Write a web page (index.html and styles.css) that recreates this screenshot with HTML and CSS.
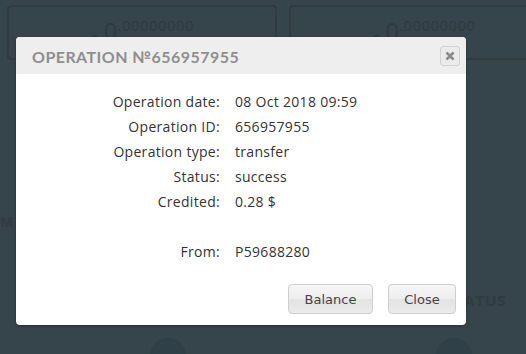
FILE: index.html
```html
<!DOCTYPE html>
<html>
<head>
<meta charset="utf-8">
<link rel="stylesheet" href="styles.css">
</head>
<body>
<div class="page">
  <div class="cards">
    <div class="card"><span class="cur">฿</span><span class="big">0</span><span class="sup">.00000000</span></div>
    <div class="card"><span class="cur">$</span><span class="big">0</span><span class="sup">.00000000</span></div>
  </div>
  <div class="ghost-m">M</div>
  <div class="ghost-status">STATUS</div>
  <div class="circles"><span class="circle"></span><span class="circle"></span></div>
</div>

<div class="modal">
  <div class="modal-header">
    <h2 class="modal-title">OPERATION №656957955</h2>
    <button class="x-btn" aria-label="close">
      <svg width="10" height="10" viewBox="0 0 10 10"><path d="M1.5 1.5 L8.5 8.5 M8.5 1.5 L1.5 8.5" stroke="#8a8a8a" stroke-width="2.6" stroke-linecap="butt"/></svg>
    </button>
  </div>
  <div class="modal-body">
    <div class="lbl">Operation date:</div><div class="val">08 Oct 2018 09:59</div>
    <div class="lbl">Operation ID:</div><div class="val">656957955</div>
    <div class="lbl">Operation type:</div><div class="val">transfer</div>
    <div class="lbl">Status:</div><div class="val">success</div>
    <div class="lbl">Credited:</div><div class="val">0.28 $</div>
    <div class="lbl"></div><div class="val"></div>
    <div class="lbl">From:</div><div class="val">P59688280</div>
  </div>
  <div class="modal-footer">
    <button class="btn btn-balance">Balance</button>
    <button class="btn btn-close">Close</button>
  </div>
</div>
</body>
</html>
```

FILE: styles.css
```css
html, body {
  margin: 0;
  padding: 0;
  width: 526px;
  height: 354px;
  overflow: hidden;
  background: #36444b;
}

.page {
  position: relative;
  height: 354px;
  overflow: hidden;
  font-family: "Open Sans", sans-serif;
}

.cards {
  display: flex;
  gap: 12px;
  padding: 5px 0 0 7px;
}

.card {
  width: 270px;
  height: 55px;
  border: 2px solid #2f3d41;
  border-radius: 4px;
  box-sizing: border-box;
  display: flex;
  align-items: flex-start;
  justify-content: center;
  padding-top: 12px;
  color: #2e3b41;
  flex-shrink: 0;
}

.card .cur { font-size: 16px; margin-top: 10px; margin-right: 4px; }
.card .big { font-size: 24px; line-height: 24px; }
.card .sup { font-size: 14px; line-height: 14px; letter-spacing: 1px; }

.ghost-m {
  position: absolute;
  left: 0;
  top: 212px;
  font-size: 14px;
  font-weight: 700;
  color: #303d43;
}

.ghost-status {
  position: absolute;
  left: 445px;
  top: 290px;
  font-size: 15px;
  font-weight: 700;
  letter-spacing: 1px;
  color: #2f3c42;
}

.circles {
  position: absolute;
  left: 150px;
  top: 338px;
  display: flex;
  gap: 250px;
}

.circle {
  width: 36px;
  height: 36px;
  border-radius: 50%;
  background: #2f4049;
}

.modal {
  position: absolute;
  left: 16px;
  top: 37px;
  width: 450px;
  height: 288px;
  background: #fff;
  border-radius: 4px;
  box-shadow: 0 1px 3px rgba(0,0,0,0.3);
  overflow: hidden;
  display: flex;
  flex-direction: column;
}

.modal-header {
  height: 37px;
  background: #eeeeee;
  display: flex;
  align-items: center;
  justify-content: space-between;
  padding: 0 6px 0 16px;
  flex-shrink: 0;
}

.modal-title {
  margin: 0;
  font-family: Lato, sans-serif;
  font-weight: 700;
  font-size: 16px;
  letter-spacing: 0.45px;
  color: #8e8e8e;
  padding-top: 2px;
}

.x-btn {
  width: 20px;
  height: 20px;
  margin-top: 1px;
  padding: 0;
  border: 1px solid #d2d2d2;
  border-radius: 3px;
  background: #ebebeb;
  display: flex;
  align-items: center;
  justify-content: center;
}

.modal-body {
  display: grid;
  grid-template-columns: 204px auto;
  grid-auto-rows: 25px;
  column-gap: 15px;
  padding-top: 15px;
  font-family: "Open Sans", sans-serif;
  font-size: 14px;
  letter-spacing: 0.3px;
  color: #333;
  align-items: center;
}

.lbl { text-align: right; }

.modal-footer {
  margin-top: auto;
  display: flex;
  justify-content: flex-end;
  gap: 15px;
  padding: 0 10px 11px 0;
}

.btn {
  height: 30px;
  border: 1px solid #cfcfcf;
  border-radius: 4px;
  background: linear-gradient(#f6f6f6 0%, #eeeeee 50%, #e4e4e4 51%, #ebebeb 100%);
  font-family: "DejaVu Sans", sans-serif;
  font-size: 13px;
  color: #444;
  padding: 0;
}

.btn-balance { width: 85px; }
.btn-close { width: 68px; }
```
